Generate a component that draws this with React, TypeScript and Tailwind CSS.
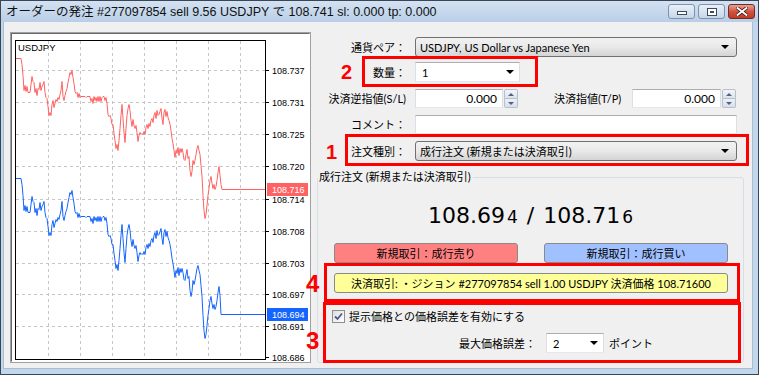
import React from "react";

const RED_PTS =
  "15,58 21,58 22,64 23,75 24,90 25,85 26,91 27,86 28,92 30,92 31,84 32,76 33,81 34,82 35,92 36,88 37,95 38,88 39,89 40,82 41,90 42,86 43,84 44,81 45,92 46,97 47,98 48,106 49,115 50,112 51,115 52,104 53,100 54,107 55,103 56,99 57,101 58,97 59,99 60,94 61,90 62,81 63,96 64,100 65,95 66,91 67,88 68,82 69,77 70,72 71,74 72,70 73,77 74,83 75,91 76,93 77,92 78,97 79,93 80,97 81,96 85,96 86,97 87,96 90,96 91,101 92,98 93,103 94,96 95,100 96,97 97,101 98,96 99,101 100,96 101,101 102,97 103,96 104,96 105,100 106,97 107,103 108,114 109,116 110,115 111,118 112,124 113,124 114,133 115,140 116,148 117,144 118,150 119,140 120,128 121,115 122,104 123,118 124,132 125,142 126,128 127,115 128,108 129,104 130,110 131,120 132,126 133,119 134,125 135,128 136,125 137,132 138,141 139,135 140,132 141,134 142,133 143,134 144,131 145,134 146,127 147,124 148,128 149,123 150,126 151,120 152,118 153,122 154,115 155,112 156,118 157,110 158,115 159,114 160,111 161,108 162,118 163,124 164,112 165,109 166,116 167,111 168,117 169,120 170,124 171,130 172,138 173,143 174,150 175,157 176,150 177,153 178,147 179,155 180,148 181,152 182,148 183,152 184,159 185,160 186,154 187,149 188,158 189,156 190,170 191,176 192,171 193,160 194,164 195,160 196,154 197,148 198,145 199,150 200,154 201,165 202,176 203,195 204,210 205,218 206,214 207,205 208,195 209,188 210,180 211,176 212,183 213,188 214,184 215,189 216,186 217,180 218,172 219,166 220,175 221,184 222,189 265,189";

const redPts: [number, number][] = RED_PTS.split(" ").map((p) => {
  const [x, y] = p.split(",").map(Number);
  return [x, y];
});

function Chart() {
  const gridX = [48, 80, 112, 144, 176, 208, 240];
  const gridY = [70, 102, 134, 166, 199, 231, 263, 294, 326];
  const labels: [number, string][] = [
    [70, "108.737"],
    [102, "108.731"],
    [134, "108.725"],
    [166, "108.720"],
    [199, "108.714"],
    [231, "108.708"],
    [263, "108.703"],
    [294, "108.697"],
    [326, "108.691"],
    [357, "108.686"],
  ];
  const red = redPts.map(([x, y]) => `${x},${y + 0.5}`).join(" ");
  const blue = redPts
    .map(([x, y]) => `${x},${(x >= 221 ? 314 : y + 120) + 0.5}`)
    .join(" ");
  return (
    <svg width={297} height={327} viewBox="12 34 297 327" className="block">
      <rect x={12} y={34} width={297} height={327} fill="#ffffff" />
      {gridX.map((x) => (
        <line
          key={"gx" + x}
          x1={x + 0.5}
          y1={41}
          x2={x + 0.5}
          y2={359}
          stroke="#c6c6c6"
          strokeDasharray="3 3"
          shapeRendering="crispEdges"
        />
      ))}
      {gridY.map((y) => (
        <line
          key={"gy" + y}
          x1={16}
          y1={y + 0.5}
          x2={265}
          y2={y + 0.5}
          stroke="#c6c6c6"
          strokeDasharray="3 3"
          shapeRendering="crispEdges"
        />
      ))}
      <polyline points={red} fill="none" stroke="#ff6262" strokeWidth={1} />
      <polyline points={blue} fill="none" stroke="#1464ff" strokeWidth={1} />
      <rect
        x={15.5}
        y={40.5}
        width={250}
        height={319}
        fill="none"
        stroke="#000"
        strokeWidth={1}
        shapeRendering="crispEdges"
      />
      <text x={18} y={51} fontFamily="Liberation Sans, Arial, sans-serif" fontSize={9.5} fill="#000">
        USDJPY
      </text>
      {labels.map(([y, t]) => (
        <g key={t}>
          <line x1={266} y1={y + 0.5} x2={269} y2={y + 0.5} stroke="#000" shapeRendering="crispEdges" />
          <text x={272} y={y + 3.5} fontFamily="Liberation Sans, Arial, sans-serif" fontSize={9} fill="#000">
            {t}
          </text>
        </g>
      ))}
      <rect x={267} y={183} width={41} height={13} fill="#ff6262" />
      <text x={272} y={193} fontFamily="Liberation Sans, Arial, sans-serif" fontSize={9} fill="#fff">
        108.716
      </text>
      <rect x={267} y={308} width={41} height={13} fill="#1464ff" />
      <text x={272} y={318} fontFamily="Liberation Sans, Arial, sans-serif" fontSize={9} fill="#fff">
        108.694
      </text>
    </svg>
  );
}

function Arrow() {
  return (
    <svg width="8" height="4" viewBox="0 0 8 4" className="block">
      <path d="M0 0 L8 0 L4 4 Z" fill="#000" />
    </svg>
  );
}

function GraySelect({ text, w }: { text: string; w: string }) {
  return (
    <div
      className={`${w} h-[20px] flex items-center border border-[#707070] rounded-[3px] bg-gradient-to-b from-[#f2f2f2] via-[#e9e9e9] to-[#d4d4d4] pl-[4px] pr-[7px]`}
    >
      <span className="flex-1 whitespace-nowrap leading-none">{text}</span>
      <Arrow />
    </div>
  );
}

function WhiteCombo({ text, w }: { text: string; w: string }) {
  return (
    <div
      className={`${w} h-[20px] flex items-center border border-[#abadb3] border-b-[#e3e9ef] border-x-[#dbdfe6] bg-white pl-[6px] pr-[5px]`}
    >
      <span className="flex-1 whitespace-nowrap leading-none">{text}</span>
      <Arrow />
    </div>
  );
}

function Spinner() {
  return (
    <div className="flex flex-col w-[14px] h-[19px] ml-[1px]">
      <div className="flex-1 flex items-center justify-center border border-[#b5c0cf] rounded-t-[2px] bg-gradient-to-b from-[#f4f6f9] to-[#dde3ec]">
        <svg width="6" height="3" viewBox="0 0 6 3" className="block">
          <path d="M0 3 L3 0 L6 3 Z" fill="#4f6288" />
        </svg>
      </div>
      <div className="flex-1 flex items-center justify-center border border-t-0 border-[#b5c0cf] rounded-b-[2px] bg-gradient-to-b from-[#eef1f5] to-[#d8dfe9]">
        <svg width="6" height="3" viewBox="0 0 6 3" className="block">
          <path d="M0 0 L6 0 L3 3 Z" fill="#4f6288" />
        </svg>
      </div>
    </div>
  );
}

function NumInput({ w }: { w: string }) {
  return (
    <div className="flex items-center">
      <div
        className={`${w} h-[19px] flex items-center justify-end border border-[#abadb3] border-b-[#e3e9ef] border-x-[#dbdfe6] bg-white pr-[5px] leading-none text-[12px]`}
      >
        0.000
      </div>
      <Spinner />
    </div>
  );
}

function TitleButtons() {
  return (
    <div className="flex items-center gap-[3px]">
      <div className="w-[27px] h-[15px] rounded-[3px] border border-[#7f93ad] bg-gradient-to-b from-[#e9f0f8] to-[#c6d6e9] flex items-end justify-center pb-[3px]">
        <div className="w-[10px] h-[4px] border border-[#3c4a5c] bg-white" />
      </div>
      <div className="w-[27px] h-[15px] rounded-[3px] border border-[#7f93ad] bg-gradient-to-b from-[#e9f0f8] to-[#c6d6e9] flex items-center justify-center">
        <div className="w-[10px] h-[8px] border border-[#3c4a5c] bg-white flex items-center justify-center">
          <div className="w-[4px] h-[2px] border border-[#3c4a5c]" />
        </div>
      </div>
      <div className="w-[27px] h-[15px] rounded-[3px] border border-[#6d2e25] bg-gradient-to-b from-[#e8a293] via-[#d0533f] to-[#c43a24] flex items-center justify-center">
        <svg width="12" height="9" viewBox="0 0 12 9" className="block">
          <path d="M1.5 1 L10.5 8 M10.5 1 L1.5 8" stroke="#3b1a14" strokeWidth="3.4" strokeLinecap="square" />
          <path d="M1.5 1 L10.5 8 M10.5 1 L1.5 8" stroke="#ffffff" strokeWidth="1.8" strokeLinecap="square" />
        </svg>
      </div>
    </div>
  );
}

function Checkbox() {
  return (
    <div className="w-[13px] h-[13px] border border-[#8e8f8f] bg-gradient-to-br from-[#dedede] to-[#ffffff] flex items-center justify-center">
      <svg width="9" height="9" viewBox="0 0 9 9" className="block">
        <path d="M1 4.5 L3.5 7 L8 1.5" stroke="#4a5a8c" strokeWidth="1.8" fill="none" />
      </svg>
    </div>
  );
}

export default function App() {
  const label = "w-[89px] text-right whitespace-nowrap leading-none";
  return (
    <div className="relative w-[759px] h-[375px] overflow-hidden border border-[#3b4654] bg-[#c2d6ec] flex flex-col text-[11px] text-black font-['Lato','Noto_Sans_CJK_JP',sans-serif]">
      {/* Title bar */}
      <div className="h-[21px] shrink-0 flex items-center pl-[5px] pr-[3px] bg-gradient-to-b from-[#d4e2f2] to-[#b9cee7]">
        <span className="flex-1 whitespace-nowrap leading-none pt-[2px] text-[12.5px] text-[#111] font-['Liberation_Sans','Noto_Sans_CJK_JP',sans-serif]">
          オーダーの発注 #277097854 sell 9.56 USDJPY で 108.741 sl: 0.000 tp: 0.000
        </span>
        <TitleButtons />
      </div>

      {/* Body */}
      <div className="flex-1 ml-[2px] mr-[5px] mb-[5px] bg-[#f0f0f0] border-x border-b border-[#a9bdd3] flex">
        {/* Chart panel */}
        <div className="ml-[6px] mt-[10px] w-[301px] h-[331px] border border-[#a0a0a0] shrink-0">
          <div className="w-full h-full border border-[#696969] border-r-white border-b-white">
            <Chart />
          </div>
        </div>

        {/* Form */}
        <div className="ml-[6px] w-[428px] flex flex-col pt-[15px]">
          <div className="h-[20px] flex items-center">
            <div className={label}>通貨ペア：</div>
            <div className="ml-[9px]">
              <GraySelect w="w-[322px]" text="USDJPY, US Dollar vs Japanese Yen" />
            </div>
          </div>
          <div className="mt-[5px] h-[20px] flex items-center">
            <div className={label}>数量：</div>
            <div className="ml-[9px]">
              <WhiteCombo w="w-[105px]" text="1" />
            </div>
          </div>
          <div className="mt-[7px] h-[19px] flex items-center">
            <div className={label}>決済逆指値(S/L)</div>
            <div className="ml-[9px]">
              <NumInput w="w-[88px]" />
            </div>
            <div className="ml-[36px] w-[78px] whitespace-nowrap leading-none">決済指値(T/P)</div>
            <NumInput w="w-[89px]" />
          </div>
          <div className="mt-[7px] h-[19px] flex items-center">
            <div className={label}>コメント：</div>
            <div className="ml-[9px] w-[322px] h-[19px] border border-[#abadb3] border-b-[#e3e9ef] border-x-[#dbdfe6] bg-white" />
          </div>
          <div className="mt-[7px] h-[20px] flex items-center">
            <div className={label}>注文種別：</div>
            <div className="ml-[9px]">
              <GraySelect w="w-[322px]" text="成行注文 (新規または決済取引)" />
            </div>
          </div>

          {/* Group box */}
          <fieldset className="mt-[8px] h-[194px] w-[427px] border border-[#d5dfe5] rounded-[3px] p-0 m-0 min-w-0">
            <legend className="ml-[0px] pl-[1px] pr-[2px] leading-[16px] whitespace-nowrap">
              成行注文 (新規または決済取引)
            </legend>
            <div className="flex flex-col">
              <div className="mt-[18px] h-[26px] flex items-center justify-center font-['DejaVu_Sans',sans-serif] text-[22px] leading-none text-black">
                <span className="flex items-baseline">
                  <span>108.69</span>
                  <span className="ml-[2px] text-[17px]">4</span>
                  <span className="mx-[9px]">/</span>
                  <span>108.71</span>
                  <span className="ml-[2px] text-[17px]">6</span>
                </span>
              </div>
              <div className="mt-[14px] pl-[16px] flex">
                <div className="w-[184px] h-[20px] flex items-center justify-center border border-[#8a8a8a] rounded-[3px] bg-[#ff8080] leading-none">
                  新規取引：成行売り
                </div>
                <div className="ml-[26px] w-[184px] h-[20px] flex items-center justify-center border border-[#8a8a8a] rounded-[3px] bg-[#a0c0ff] leading-none">
                  新規取引：成行買い
                </div>
              </div>
              <div className="mt-[10px] pl-[16px] flex">
                <div className="w-[394px] h-[20px] flex items-center justify-center border border-[#8a8a8a] rounded-[3px] bg-[#ffff99] leading-none whitespace-nowrap">
                  決済取引: ・ジション #277097854 sell 1.00 USDJPY 決済価格 108.71600
                </div>
              </div>
              <div className="mt-[15px] pl-[14px] h-[16px] flex items-center">
                <Checkbox />
                <span className="ml-[4px] leading-none whitespace-nowrap">提示価格との価格誤差を有効にする</span>
              </div>
              <div className="mt-[9px] h-[20px] flex items-center">
                <div className="w-[218px] text-right whitespace-nowrap leading-none">最大価格誤差：</div>
                <div className="ml-[10px]">
                  <WhiteCombo w="w-[58px]" text="2" />
                </div>
                <span className="ml-[5px] leading-none whitespace-nowrap">ポイント</span>
              </div>
            </div>
          </fieldset>
        </div>
      </div>

      {/* Red annotations (overlays) */}
      <div className="absolute left-[361px] top-[55px] w-[176px] h-[31px] border-[3px] border-[#ff0000]" />
      <div className="absolute left-[344px] top-[133px] w-[404px] h-[32px] border-[3px] border-[#ff0000]" />
      <div className="absolute left-[323px] top-[262px] w-[416px] h-[39px] border-[3px] border-[#ff0000]" />
      <div className="absolute left-[322px] top-[301px] w-[418px] h-[61px] border-[3px] border-[#ff0000]" />
      <div className="absolute left-[340px] top-[61px] text-[20px] leading-[20px] font-bold text-[#ff0000] font-['Liberation_Sans',Arial,sans-serif]">2</div>
      <div className="absolute left-[325px] top-[141px] text-[20px] leading-[20px] font-bold text-[#ff0000] font-['Liberation_Sans',Arial,sans-serif]">1</div>
      <div className="absolute left-[305px] top-[271px] text-[24px] leading-[24px] font-bold text-[#ff0000] font-['Liberation_Sans',Arial,sans-serif]">4</div>
      <div className="absolute left-[305px] top-[328px] text-[24px] leading-[24px] font-bold text-[#ff0000] font-['Liberation_Sans',Arial,sans-serif]">3</div>
    </div>
  );
}
